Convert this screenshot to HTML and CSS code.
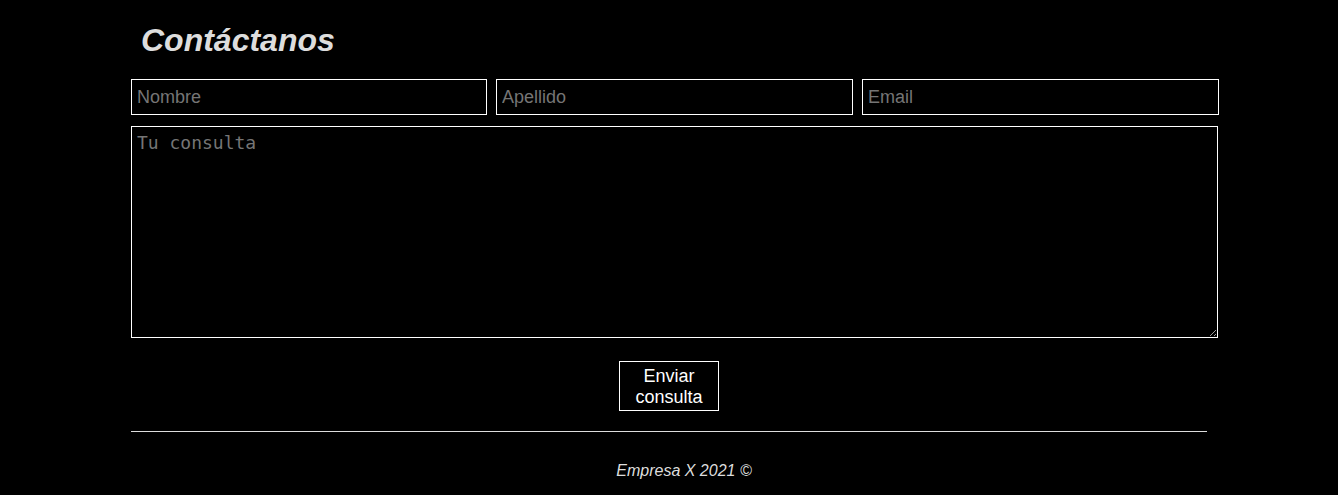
FILE: index.html
```html
<!DOCTYPE html>
<html lang="es">
<head>
<meta charset="utf-8">
<title>Contáctanos</title>
<link rel="stylesheet" href="styles.css">
</head>
<body>
<main class="container">
  <h1 class="title">Contáctanos</h1>
  <form class="form">
    <div class="row">
      <input class="field field-first" type="text" placeholder="Nombre">
      <input class="field" type="text" placeholder="Apellido">
      <input class="field" type="email" placeholder="Email">
    </div>
    <textarea class="message" placeholder="Tu consulta"></textarea>
    <div class="actions">
      <button class="send" type="button">Enviar consulta</button>
    </div>
  </form>
  <hr class="divider">
  <footer class="footer">Empresa X 2021 ©</footer>
</main>
</body>
</html>
```
FILE: styles.css
```css
html, body {
  margin: 0;
  background: #000;
}
body {
  font-family: "Liberation Sans", Arial, sans-serif;
  color: #fff;
}
.container {
  width: 1076px;
  margin: 0 auto;
  padding-top: 22px;
}
.title {
  margin: 0 0 20px 10px;
  font-size: 32px;
  line-height: 37px;
  font-weight: bold;
  font-style: italic;
  color: #ddd;
}
.form {
  display: flex;
  flex-direction: column;
}
.row {
  display: flex;
  gap: 9px;
  width: 1088px;
}
.field {
  box-sizing: border-box;
  width: 357px;
  height: 36px;
  margin: 0;
  padding: 0 5px;
  background: #000;
  border: 1px solid #fff;
  color: #fff;
  font-family: "Liberation Sans", Arial, sans-serif;
  font-size: 18px;
  outline: none;
}
.field-first {
  width: 356px;
}
.field::placeholder {
  color: #757575;
}
.message {
  box-sizing: border-box;
  width: 1087px;
  height: 212px;
  margin: 11px 0 0 0;
  padding: 5px;
  background: #000;
  border: 1px solid #fff;
  color: #fff;
  font-family: "DejaVu Sans Mono", monospace;
  font-size: 18px;
  line-height: 22px;
}
.message::placeholder {
  color: #757575;
}
.actions {
  display: flex;
  justify-content: center;
  margin-top: 23px;
}
.send {
  box-sizing: border-box;
  width: 100px;
  height: 50px;
  padding: 1px 8px 0;
  background: #000;
  border: 1px solid #fff;
  color: #fff;
  font-family: "Liberation Sans", Arial, sans-serif;
  font-size: 18px;
  line-height: 21px;
}
.divider {
  margin: 20px 0 0 0;
  border: 0;
  border-top: 1px solid #ddd;
  height: 0;
}
.footer {
  padding: 30px 0 20px 30px;
  text-align: center;
  font-style: italic;
  font-size: 16px;
  color: #ddd;
}
```
